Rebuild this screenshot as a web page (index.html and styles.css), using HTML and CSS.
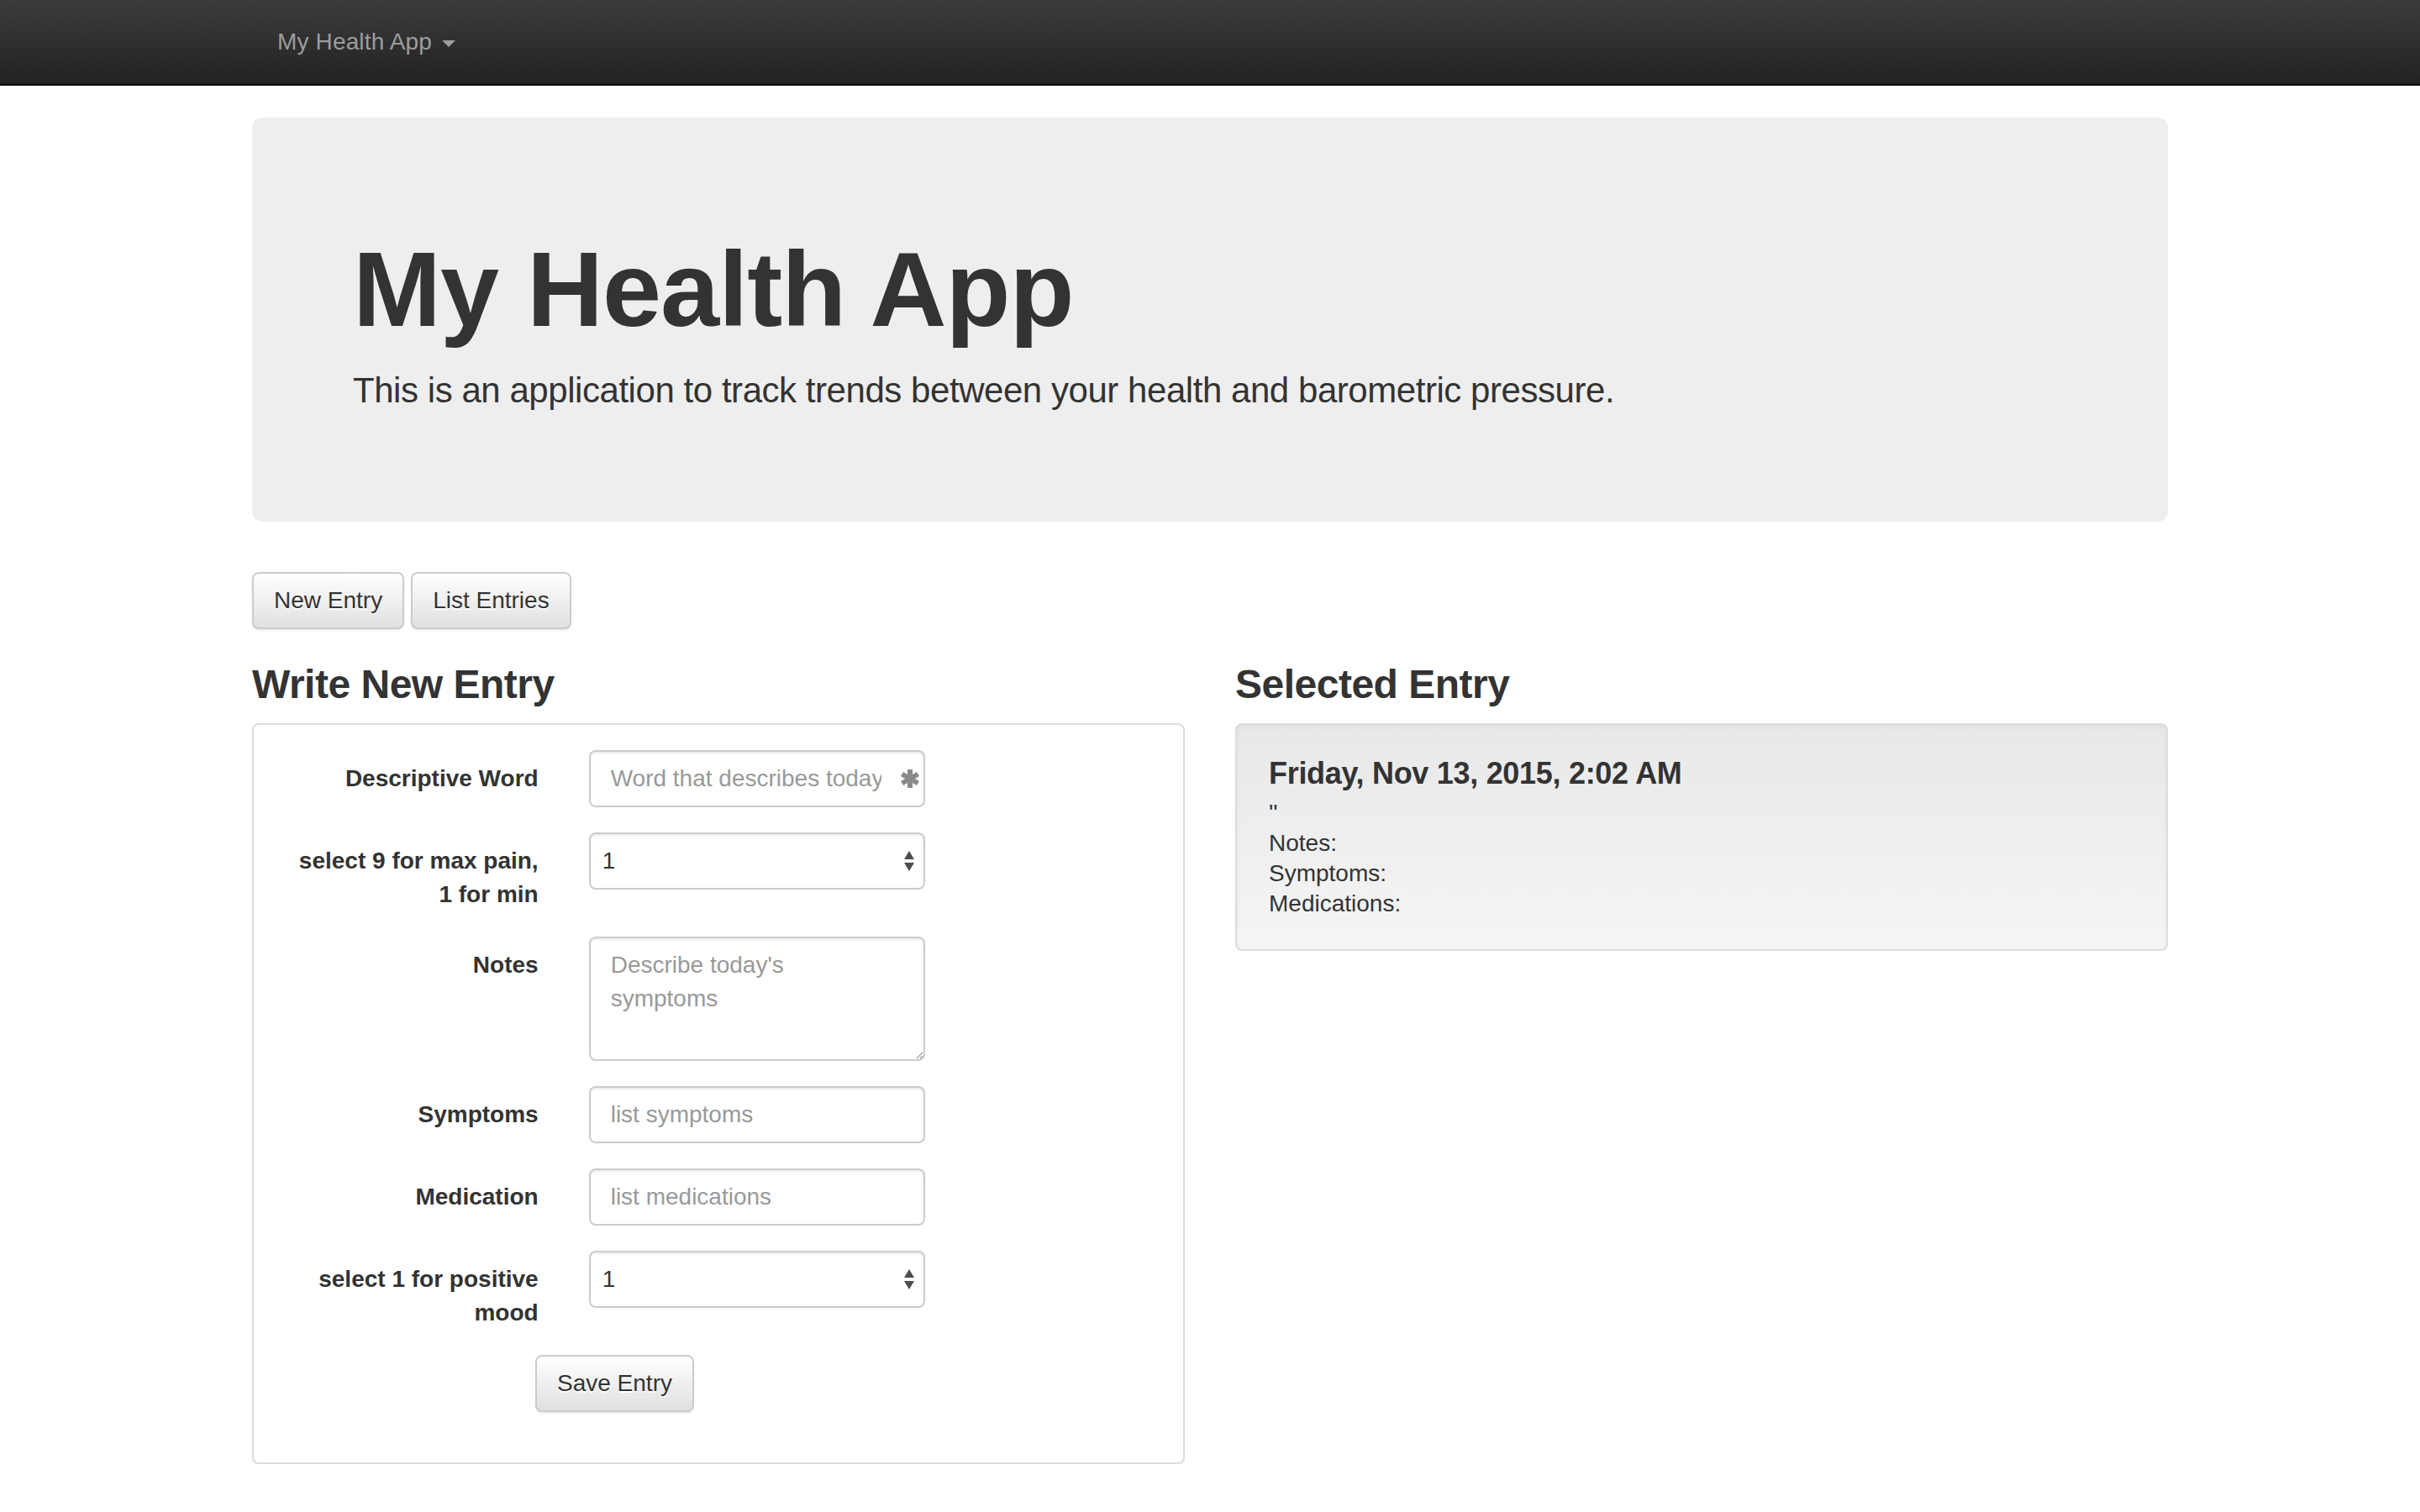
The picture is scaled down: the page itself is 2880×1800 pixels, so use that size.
FILE: index.html
```html
<!DOCTYPE html>
<html lang="en">
<head>
<meta charset="utf-8">
<title>My Health App</title>
<link rel="stylesheet" href="styles.css">
</head>
<body>
<nav class="navbar">
  <div class="container">
    <a class="nav-link" href="#">My Health App <span class="caret"></span></a>
  </div>
</nav>

<div class="container">
  <div class="jumbotron">
    <h1>My Health App</h1>
    <p>This is an application to track trends between your health and barometric pressure.</p>
  </div>

  <div class="btn-row">
    <button class="btn">New Entry</button>
    <button class="btn">List Entries</button>
  </div>

  <div class="columns">
    <div class="col">
      <h3>Write New Entry</h3>
      <div class="panel">
        <form class="form-horizontal">
          <div class="form-group">
            <label class="control-label">Descriptive Word</label>
            <div class="field has-feedback">
              <input class="form-control" type="text" placeholder="Word that describes today">
              <svg class="feedback-icon" viewBox="0 0 24 24" width="24" height="24" aria-hidden="true">
                <g stroke="#8a8a8a" stroke-width="6" stroke-linecap="butt">
                  <line x1="12" y1="1" x2="12" y2="23"/>
                  <line x1="2.5" y1="6.5" x2="21.5" y2="17.5"/>
                  <line x1="2.5" y1="17.5" x2="21.5" y2="6.5"/>
                </g>
              </svg>
            </div>
          </div>
          <div class="form-group">
            <label class="control-label">select 9 for max pain, <span class="nowrap">1 for min</span></label>
            <div class="field select-wrap">
              <select class="form-control select">
                <option>1</option><option>2</option><option>3</option><option>4</option><option>5</option><option>6</option><option>7</option><option>8</option><option>9</option>
              </select>
              <svg class="select-arrows" viewBox="0 0 12 26" width="12" height="26" aria-hidden="true">
                <polygon points="0,11 6,1 12,11" fill="#4d4d4d"/>
                <polygon points="0,15 12,15 6,25" fill="#4d4d4d"/>
              </svg>
            </div>
          </div>
          <div class="form-group">
            <label class="control-label">Notes</label>
            <div class="field">
              <textarea class="form-control textarea" rows="3" placeholder="Describe today's symptoms"></textarea>
            </div>
          </div>
          <div class="form-group">
            <label class="control-label">Symptoms</label>
            <div class="field">
              <input class="form-control" type="text" placeholder="list symptoms">
            </div>
          </div>
          <div class="form-group">
            <label class="control-label">Medication</label>
            <div class="field">
              <input class="form-control" type="text" placeholder="list medications">
            </div>
          </div>
          <div class="form-group">
            <label class="control-label">select 1 for positive mood</label>
            <div class="field select-wrap">
              <select class="form-control select">
                <option>1</option><option>0</option>
              </select>
              <svg class="select-arrows" viewBox="0 0 12 26" width="12" height="26" aria-hidden="true">
                <polygon points="0,11 6,1 12,11" fill="#4d4d4d"/>
                <polygon points="0,15 12,15 6,25" fill="#4d4d4d"/>
              </svg>
            </div>
          </div>
          <div class="form-actions">
            <button class="btn" type="button">Save Entry</button>
          </div>
        </form>
      </div>
    </div>

    <div class="col">
      <h3>Selected Entry</h3>
      <div class="well">
        <h4>Friday, Nov 13, 2015, 2:02 AM</h4>
        <div class="entry-line">''</div>
        <div class="entry-line">Notes:</div>
        <div class="entry-line">Symptoms:</div>
        <div class="entry-line">Medications:</div>
      </div>
    </div>
  </div>
</div>
</body>
</html>
```

FILE: styles.css
```css
* {
  box-sizing: border-box;
}

html, body {
  margin: 0;
  padding: 0;
  background: #fff;
}

body {
  font-family: "Liberation Sans", Arial, sans-serif;
  font-size: 28px;
  line-height: 40px;
  color: #333;
}

.container {
  width: 2280px;
  margin: 0 auto;
}

.nowrap {
  white-space: nowrap;
}

/* navbar */
.navbar {
  height: 102px;
  background-image: linear-gradient(to bottom, #3c3c3c 0, #222 100%);
  border-bottom: 2px solid #080808;
  margin-bottom: 38px;
}

.nav-link {
  display: inline-block;
  padding: 30px 30px;
  color: #9d9d9d;
  text-decoration: none;
  font-size: 28px;
  line-height: 40px;
  letter-spacing: 0.15px;
}

.caret {
  display: inline-block;
  width: 0;
  height: 0;
  margin-left: 4px;
  vertical-align: middle;
  border-top: 8px solid #9d9d9d;
  border-left: 8px solid transparent;
  border-right: 8px solid transparent;
}

/* jumbotron */
.jumbotron {
  background: #eee;
  border-radius: 12px;
  padding: 96px 120px;
  margin-bottom: 60px;
}

.jumbotron h1 {
  font-size: 126px;
  line-height: 1.1;
  font-weight: 700;
  letter-spacing: -1px;
  margin: 40px 0 20px;
  color: #333;
}

.jumbotron p {
  font-size: 42px;
  line-height: 60px;
  font-weight: 300;
  letter-spacing: -0.45px;
  margin: 0 0 30px;
}

/* buttons */
.btn-row {
  display: flex;
  gap: 8px;
}

.btn {
  height: 68px;
  padding: 12px 24px;
  font-family: "Liberation Sans", Arial, sans-serif;
  font-size: 28px;
  line-height: 40px;
  color: #333;
  border: 2px solid #ccc;
  border-radius: 8px;
  background-image: linear-gradient(to bottom, #fff 0, #e0e0e0 100%);
  text-shadow: 0 2px 0 #fff;
  box-shadow: inset 0 2px 0 rgba(255, 255, 255, .15), 0 2px 2px rgba(0, 0, 0, .075);
  cursor: pointer;
}

/* columns */
.columns {
  display: grid;
  grid-template-columns: 1110px 1110px;
  column-gap: 60px;
}

h3 {
  font-size: 48px;
  line-height: 1.1;
  font-weight: 700;
  letter-spacing: -0.5px;
  margin: 40px 0 20px;
  color: #333;
}

/* panel + form */
.panel {
  border: 2px solid #ddd;
  border-radius: 8px;
  box-shadow: 0 2px 2px rgba(0, 0, 0, .05);
  padding: 30px 0;
}

.form-group {
  display: grid;
  grid-template-columns: 4fr 5fr 3fr;
  margin-bottom: 30px;
}

.control-label {
  grid-column: 1;
  padding: 14px 30px 0;
  text-align: right;
  font-weight: 700;
  line-height: 40px;
}

.field {
  grid-column: 2;
  padding: 0 30px;
  position: relative;
}

.form-control {
  display: block;
  width: 100%;
  height: 68px;
  padding: 12px 24px;
  font-family: "Liberation Sans", Arial, sans-serif;
  font-size: 28px;
  line-height: 40px;
  color: #555;
  background: #fff;
  border: 2px solid #ccc;
  border-radius: 8px;
  box-shadow: inset 0 2px 2px rgba(0, 0, 0, .075);
  outline: none;
}

.form-control::placeholder {
  color: #999;
  opacity: 1;
}

.has-feedback .form-control {
  padding-right: 50px;
}

.feedback-icon {
  position: absolute;
  right: 36px;
  top: 22px;
}

.select {
  appearance: none;
  -webkit-appearance: none;
  padding-left: 14px;
  color: #333;
}

.select-arrows {
  position: absolute;
  right: 43px;
  top: 21px;
}

.textarea {
  height: 148px;
  padding-right: 44px;
  resize: vertical;
}

.form-actions {
  padding-left: 335px;
  margin-bottom: 30px;
}

/* well */
.well {
  border: 2px solid #dcdcdc;
  border-radius: 8px;
  padding: 38px 38px 36px;
  background-image: linear-gradient(to bottom, #e8e8e8 0, #f5f5f5 100%);
  box-shadow: inset 0 2px 6px rgba(0, 0, 0, .05), 0 2px 0 rgba(255, 255, 255, .1);
}

.well h4 {
  font-size: 36px;
  line-height: 40px;
  font-weight: 700;
  letter-spacing: -0.3px;
  margin: 0 0 9px;
}

.entry-line {
  line-height: 36px;
  font-size: 28px;
}
```
